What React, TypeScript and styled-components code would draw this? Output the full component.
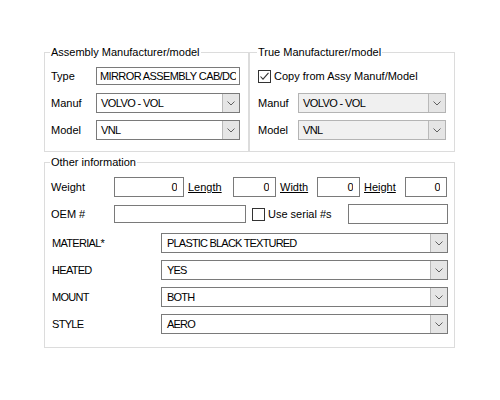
import React from "react";
import styled, { createGlobalStyle } from "styled-components";

const Global = createGlobalStyle`
  html, body { margin: 0; padding: 0; background: #ffffff; }
  body {
    font-family: "Liberation Sans", Arial, sans-serif;
    font-size: 11px;
    color: #000000;
  }
`;

const Page = styled.div`
  width: 500px;
  height: 400px;
  box-sizing: border-box;
  padding: 46px 0 0 44px;
`;

const Form = styled.div`
  width: 411px;
  display: flex;
  flex-direction: column;
  gap: 4px;
`;

const TopRow = styled.div`
  display: flex;
`;

const Group = styled.fieldset<{ $w?: number; $pl: number; $pr: number; $pt: number; $pb: number }>`
  margin: 0;
  min-width: 0;
  box-sizing: border-box;
  width: ${(p) => (p.$w ? `${p.$w}px` : "auto")};
  border: 1px solid #dcdcdc;
  padding: ${(p) => `${p.$pt}px ${p.$pr}px ${p.$pb}px ${p.$pl}px`};
`;

const Legend = styled.legend`
  padding: 0 1px;
  margin-left: -1px;
  line-height: 13px;
  font-size: 11px;
`;

const FieldGrid = styled.div<{ $label: number }>`
  display: grid;
  grid-template-columns: ${(p) => p.$label}px 1fr;
  grid-auto-rows: 20px;
  row-gap: 7px;
  align-items: center;
`;

const Label = styled.span<{ $w?: number; $caps?: boolean }>`
  display: block;
  flex: none;
  width: ${(p) => (p.$w ? `${p.$w}px` : "auto")};
  padding-left: ${(p) => (p.$caps ? "1px" : "0")};
  box-sizing: border-box;
  white-space: nowrap;
  letter-spacing: ${(p) => (p.$caps ? "-0.7px" : "0")};
`;

const LinkLabel = styled.span<{ $w: number }>`
  flex: none;
  width: ${(p) => p.$w}px;
  box-sizing: border-box;
  padding-left: 4px;
  text-decoration: underline;
  white-space: nowrap;
`;

const TextBox = styled.input<{ $w?: number; $h?: number; $right?: boolean }>`
  box-sizing: border-box;
  flex: none;
  width: ${(p) => (p.$w ? `${p.$w}px` : "100%")};
  height: ${(p) => p.$h ?? 20}px;
  margin: 0;
  border: 1px solid #7a7a7a;
  background: #ffffff;
  font-family: "Liberation Sans", Arial, sans-serif;
  font-size: 11px;
  color: #000000;
  padding: 0 ${(p) => (p.$right ? "6px" : "3px")} 0 3px;
  text-align: ${(p) => (p.$right ? "right" : "left")};
  letter-spacing: -0.6px;
  outline: none;
`;

const ComboCell = styled.div<{ $w: number }>`
  flex: none;
  width: ${(p) => p.$w}px;
`;

const Combo = styled.div<{ $disabled?: boolean }>`
  box-sizing: border-box;
  height: 20px;
  display: flex;
  align-items: stretch;
  border: 1px solid ${(p) => (p.$disabled ? "#b4b4b4" : "#7a7a7a")};
  background: ${(p) => (p.$disabled ? "#f0f0f0" : "#ffffff")};
`;

const ComboValue = styled.span<{ $pl?: number; $tight?: boolean }>`
  flex: 1;
  display: flex;
  align-items: center;
  padding-left: ${(p) => p.$pl ?? 4}px;
  white-space: nowrap;
  overflow: hidden;
  letter-spacing: ${(p) => (p.$tight ? "-0.8px" : "-0.6px")};
`;

const ComboButton = styled.span`
  flex: none;
  width: 16px;
  display: flex;
  align-items: center;
  justify-content: center;
  background: #e5e5e5;
  border-left: 1px solid #b9b9b9;
`;

const Line = styled.div<{ $mt?: number }>`
  display: flex;
  align-items: center;
  height: 20px;
  margin-top: ${(p) => p.$mt ?? 0}px;
`;

const Stack = styled.div`
  display: flex;
  flex-direction: column;
  gap: 7px;
`;

const CheckRow = styled.label<{ $ml?: number; $w?: number }>`
  display: flex;
  align-items: center;
  gap: 3px;
  flex: none;
  margin-left: ${(p) => p.$ml ?? 0}px;
  width: ${(p) => (p.$w ? `${p.$w}px` : "auto")};
  white-space: nowrap;
  grid-column: 1 / -1;
`;

const Box = styled.span`
  box-sizing: border-box;
  width: 13px;
  height: 13px;
  border: 1px solid #333333;
  background: #ffffff;
  display: flex;
  align-items: center;
  justify-content: center;
  flex: none;
`;

const Chevron = () => (
  <svg width="8" height="5" viewBox="0 0 8 5">
    <polyline points="0.5,0.5 4,4 7.5,0.5" fill="none" stroke="#606060" strokeWidth="1" />
  </svg>
);

const Check = () => (
  <svg width="11" height="11" viewBox="0 0 11 11">
    <polyline points="1.5,5.5 4,8.2 9.5,1.8" fill="none" stroke="#333333" strokeWidth="1.1" />
  </svg>
);

const ComboBox: React.FC<{ value: string; disabled?: boolean; pl?: number; tight?: boolean }> = ({
  value,
  disabled,
  pl,
  tight,
}) => (
  <Combo $disabled={disabled}>
    <ComboValue $pl={pl} $tight={tight}>
      {value}
    </ComboValue>
    <ComboButton>
      <Chevron />
    </ComboButton>
  </Combo>
);

const CheckBox: React.FC<{ checked?: boolean; label: string; ml?: number; w?: number }> = ({ checked, label, ml, w }) => (
  <CheckRow $ml={ml} $w={w}>
    <Box>{checked && <Check />}</Box>
    <span>{label}</span>
  </CheckRow>
);

const attributes = [
  { name: "MATERIAL*", value: "PLASTIC BLACK TEXTURED" },
  { name: "HEATED", value: "YES" },
  { name: "MOUNT", value: "BOTH" },
  { name: "STYLE", value: "AERO" },
];

export default function App() {
  return (
    <>
      <Global />
      <Page>
        <Form>
          <TopRow>
            <Group $w={205} $pl={6} $pr={8} $pt={7} $pb={11}>
              <Legend>Assembly Manufacturer/model</Legend>
              <FieldGrid $label={45}>
                <Label>Type</Label>
                <TextBox $h={18} readOnly defaultValue="MIRROR ASSEMBLY CAB/DOOR" />
                <Label>Manuf</Label>
                <ComboBox value="VOLVO - VOL" />
                <Label>Model</Label>
                <ComboBox value="VNL" />
              </FieldGrid>
            </Group>
            <Group $w={206} $pl={8} $pr={8} $pt={7} $pb={11}>
              <Legend>True Manufacturer/model</Legend>
              <FieldGrid $label={40}>
                <CheckBox checked label="Copy from Assy Manuf/Model" />
                <Label>Manuf</Label>
                <ComboBox value="VOLVO - VOL" disabled />
                <Label>Model</Label>
                <ComboBox value="VNL" disabled />
              </FieldGrid>
            </Group>
          </TopRow>
          <Group $pl={6} $pr={6} $pt={8} $pb={13}>
            <Legend>Other information</Legend>
            <Stack>
              <Line>
                <Label $w={63}>Weight</Label>
                <TextBox $w={70} $right readOnly defaultValue="0" />
                <LinkLabel $w={49}>Length</LinkLabel>
                <TextBox $w={43} $right readOnly defaultValue="0" />
                <LinkLabel $w={41}>Width</LinkLabel>
                <TextBox $w={43} $right readOnly defaultValue="0" />
                <LinkLabel $w={45}>Height</LinkLabel>
                <TextBox $w={42} $right readOnly defaultValue="0" />
              </Line>
              <Line>
                <Label $w={63}>OEM #</Label>
                <TextBox $w={132} $h={18} readOnly defaultValue="" />
                <CheckBox label="Use serial #s" ml={6} w={96} />
                <TextBox $w={100} readOnly defaultValue="" />
              </Line>
              {attributes.map((a, i) => (
                <Line key={a.name} $mt={i === 0 ? 2 : 0}>
                  <Label $w={110} $caps>
                    {a.name}
                  </Label>
                  <ComboCell $w={287}>
                    <ComboBox value={a.value} pl={5} tight />
                  </ComboCell>
                </Line>
              ))}
            </Stack>
          </Group>
        </Form>
      </Page>
    </>
  );
}
